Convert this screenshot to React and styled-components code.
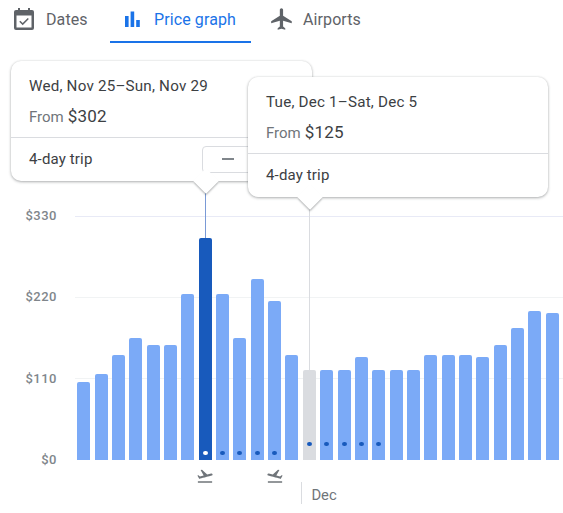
import React from "react";
import styled, { createGlobalStyle } from "styled-components";
import { MdFlight, MdFlightTakeoff } from "react-icons/md";

const Global = createGlobalStyle`
  html, body { margin: 0; padding: 0; background: #fff; }
  body { font-family: Roboto, "Liberation Sans", sans-serif; color: #3c4043; }
`;

const Page = styled.div`
  position: relative;
  width: 563px;
  height: 513px;
  overflow: hidden;
  display: flex;
  flex-direction: column;
`;

const Tabs = styled.div`
  display: flex;
  height: 43px;
  margin-bottom: 173px;
`;

const Tab = styled.div`
  display: flex;
  align-items: center;
  box-sizing: border-box;
  width: ${p => p.$w}px;
  padding: 0 0 3px ${p => p.$pad}px;
  gap: ${p => p.$gap}px;
  font-size: 16px;
  letter-spacing: 0.1px;
  color: ${p => (p.$active ? "#1a73e8" : "#5f6368")};
  border-bottom: 2.5px solid ${p => (p.$active ? "#1a73e8" : "transparent")};
`;

const Chart = styled.div`
  display: grid;
  grid-template-columns: 57px 1fr;
  column-gap: 18px;
  height: 244px;
`;

const Axis = styled.div`
  display: flex;
  flex-direction: column;
  justify-content: space-between;
  margin: -8px 0 -7px;
  text-align: right;
  font-size: 13px;
  font-weight: 500;
  line-height: 15px;
  letter-spacing: 0.5px;
  color: #80868b;
`;

const Plot = styled.div`
  position: relative;
  padding-right: 2px;
`;

const GridRows = styled.div`
  position: absolute;
  inset: 0 0 0 0;
  display: flex;
  flex-direction: column;
`;

const GridRow = styled.div`
  height: 81px;
  box-sizing: border-box;
  border-top: 1px solid ${p => p.$c};
`;

const Lane = styled.div`
  position: relative;
  display: grid;
  grid-template-columns: repeat(28, 1fr);
  justify-items: center;
`;

const BarLane = styled(Lane)`
  height: 100%;
  align-items: end;
`;

const Bar = styled.div`
  position: relative;
  width: 13px;
  border-radius: 2px 2px 0 0;
  background: ${p => p.$c};
`;

const Dot = styled.span`
  position: absolute;
  left: 4px;
  bottom: ${p => p.$b}px;
  width: 5px;
  height: 4.5px;
  border-radius: 50%;
  background: ${p => p.$c};
`;

const Stem = styled.div`
  position: absolute;
  left: 6px;
  bottom: 100%;
  height: ${p => p.$h}px;
  width: 1px;
  background: ${p => p.$c};
`;

const FooterWrap = styled.div`
  margin-left: 75px;
  padding-right: 2px;
`;

const FooterLane = styled(Lane)`
  align-items: start;
`;

const FlightMark = styled.div`
  grid-column: ${p => p.$col};
  grid-row: 1;
  margin-top: 7px;
  display: flex;
  color: #70757a;
  transform: ${p => (p.$flip ? "scaleX(-1)" : "none")};
`;

const Month = styled.div`
  grid-column: 14 / span 3;
  grid-row: 1;
  justify-self: start;
  margin-top: 22px;
  padding: 2px 0 0 9px;
  height: 20px;
  border-left: 1px solid #dadce0;
  font-size: 14.8px;
  line-height: 22px;
  color: #70757a;
`;

const Card = styled.div`
  position: absolute;
  left: ${p => p.$x}px;
  top: ${p => p.$y}px;
  width: ${p => p.$w}px;
  height: 120px;
  background: #fff;
  border-radius: 10px;
  box-shadow: 0 1px 3px rgba(60, 64, 67, 0.4), 0 0 2px rgba(60, 64, 67, 0.12);
  display: flex;
  flex-direction: column;
`;

const CardTop = styled.div`
  height: 77px;
  box-sizing: border-box;
  padding: 15px 18px 0;
  border-bottom: 1px solid #dadce0;
`;

const DateLine = styled.div`
  font-size: 15.2px;
  line-height: 20px;
  letter-spacing: 0.2px;
  color: #3c4043;
`;

const PriceLine = styled.div`
  margin-top: 10px;
  font-size: 15px;
  line-height: 20px;
  color: #70757a;
  display: flex;
  align-items: baseline;
  gap: 4px;
`;

const Price = styled.span`
  font-size: 17px;
  color: #3c4043;
  letter-spacing: 0.2px;
`;

const CardBottom = styled.div`
  flex: 1;
  display: flex;
  align-items: center;
  padding: 0 0 1px 18px;
  font-size: 15px;
  letter-spacing: 0.15px;
  color: #3c4043;
`;

const Stepper = styled.div`
  margin-left: auto;
  width: 110px;
  height: 27px;
  box-sizing: border-box;
  border: 1px solid #dadce0;
  border-radius: 4px 0 0 4px;
  display: flex;
  align-items: center;
  padding-left: 19px;
`;

const Minus = styled.span`
  width: 12px;
  height: 1.5px;
  background: #80868b;
`;

const Arrow = styled.div`
  position: absolute;
  left: ${p => p.$x}px;
  bottom: -9px;
  width: 18px;
  height: 18px;
  background: #fff;
  transform: translateX(-50%) rotate(45deg);
  box-shadow: 1.5px 1.5px 2px -0.5px rgba(60, 64, 67, 0.4);
`;

const tops = [382, 374, 355, 338, 345, 345, 294, 238, 294, 338, 279, 301, 355, 370, 370, 370, 357, 370, 370, 370, 355, 355, 355, 357, 345, 328, 311, 313];

const barColor = i => (i === 7 ? "#185abc" : i === 13 ? "#dadce0" : "#7baaf7");

const dotFor = i => {
  if (i === 7) return { b: 5, c: "#fff" };
  if (i >= 8 && i <= 11) return { b: 5, c: "#185abc" };
  if (i >= 13 && i <= 17) return { b: 14, c: "#185abc" };
  return null;
};

const stemFor = i => {
  if (i === 7) return { h: 58, c: "#7a9ad6" };
  if (i === 13) return { h: 175, c: "#dadce0" };
  return null;
};

const grids = ["#e8eaf6", "#f1f3f4", "#f1f3f4"];

const CalendarIcon = () => (
  <svg width="20" height="22" viewBox="0 0 20 22">
    <rect x="0" y="2" width="20" height="20" rx="2" fill="#5f6368" />
    <rect x="4" y="0" width="2" height="4" fill="#5f6368" />
    <rect x="14" y="0" width="2" height="4" fill="#5f6368" />
    <rect x="2.5" y="7.5" width="15" height="12" fill="#fff" />
    <path d="M5.8 13.2l2.9 2.9 5.6-5.6" fill="none" stroke="#5f6368" strokeWidth="1.5" />
  </svg>
);

const BarsIcon = () => (
  <svg width="16" height="16" viewBox="0 0 16 16" fill="#1a73e8">
    <rect x="1" y="5" width="3.6" height="11" />
    <rect x="6.6" y="0.5" width="3.6" height="15.5" />
    <rect x="12.2" y="9" width="3.6" height="7" />
  </svg>
);

export default function App() {
  return (
    <Page>
      <Global />
      <Tabs>
        <Tab $w={110} $pad={14} $gap={12}>
          <CalendarIcon />
          Dates
        </Tab>
        <Tab $w={141} $pad={14} $gap={14} $active>
          <BarsIcon />
          Price graph
        </Tab>
        <Tab $w={140} $pad={18} $gap={8}>
          <MdFlight size={26} color="#5f6368" />
          Airports
        </Tab>
      </Tabs>

      <Chart>
        <Axis>
          <div>$330</div>
          <div>$220</div>
          <div>$110</div>
          <div>$0</div>
        </Axis>
        <Plot>
          <GridRows>
            {grids.map((c, i) => (
              <GridRow key={i} $c={c} />
            ))}
          </GridRows>
          <BarLane>
            {tops.map((t, i) => {
              const d = dotFor(i);
              const s = stemFor(i);
              return (
                <Bar key={i} $c={barColor(i)} style={{ height: 460 - t }}>
                  {s && <Stem $h={s.h} $c={s.c} />}
                  {d && <Dot $b={d.b} $c={d.c} />}
                </Bar>
              );
            })}
          </BarLane>
        </Plot>
      </Chart>

      <FooterWrap>
        <FooterLane>
          <FlightMark $col={8}><MdFlightTakeoff size={18} /></FlightMark>
          <FlightMark $col={12} $flip><MdFlightTakeoff size={18} /></FlightMark>
          <Month>Dec</Month>
        </FooterLane>
      </FooterWrap>

      <Card $x={11} $y={61} $w={301}>
        <CardTop>
          <DateLine>Wed, Nov 25–Sun, Nov 29</DateLine>
          <PriceLine>From <Price>$302</Price></PriceLine>
        </CardTop>
        <CardBottom>
          4-day trip
          <Stepper><Minus /></Stepper>
        </CardBottom>
        <Arrow $x={194.5} />
      </Card>

      <Card $x={248} $y={77} $w={300}>
        <CardTop>
          <DateLine>Tue, Dec 1–Sat, Dec 5</DateLine>
          <PriceLine>From <Price>$125</Price></PriceLine>
        </CardTop>
        <CardBottom>4-day trip</CardBottom>
        <Arrow $x={61.5} />
      </Card>
    </Page>
  );
}
